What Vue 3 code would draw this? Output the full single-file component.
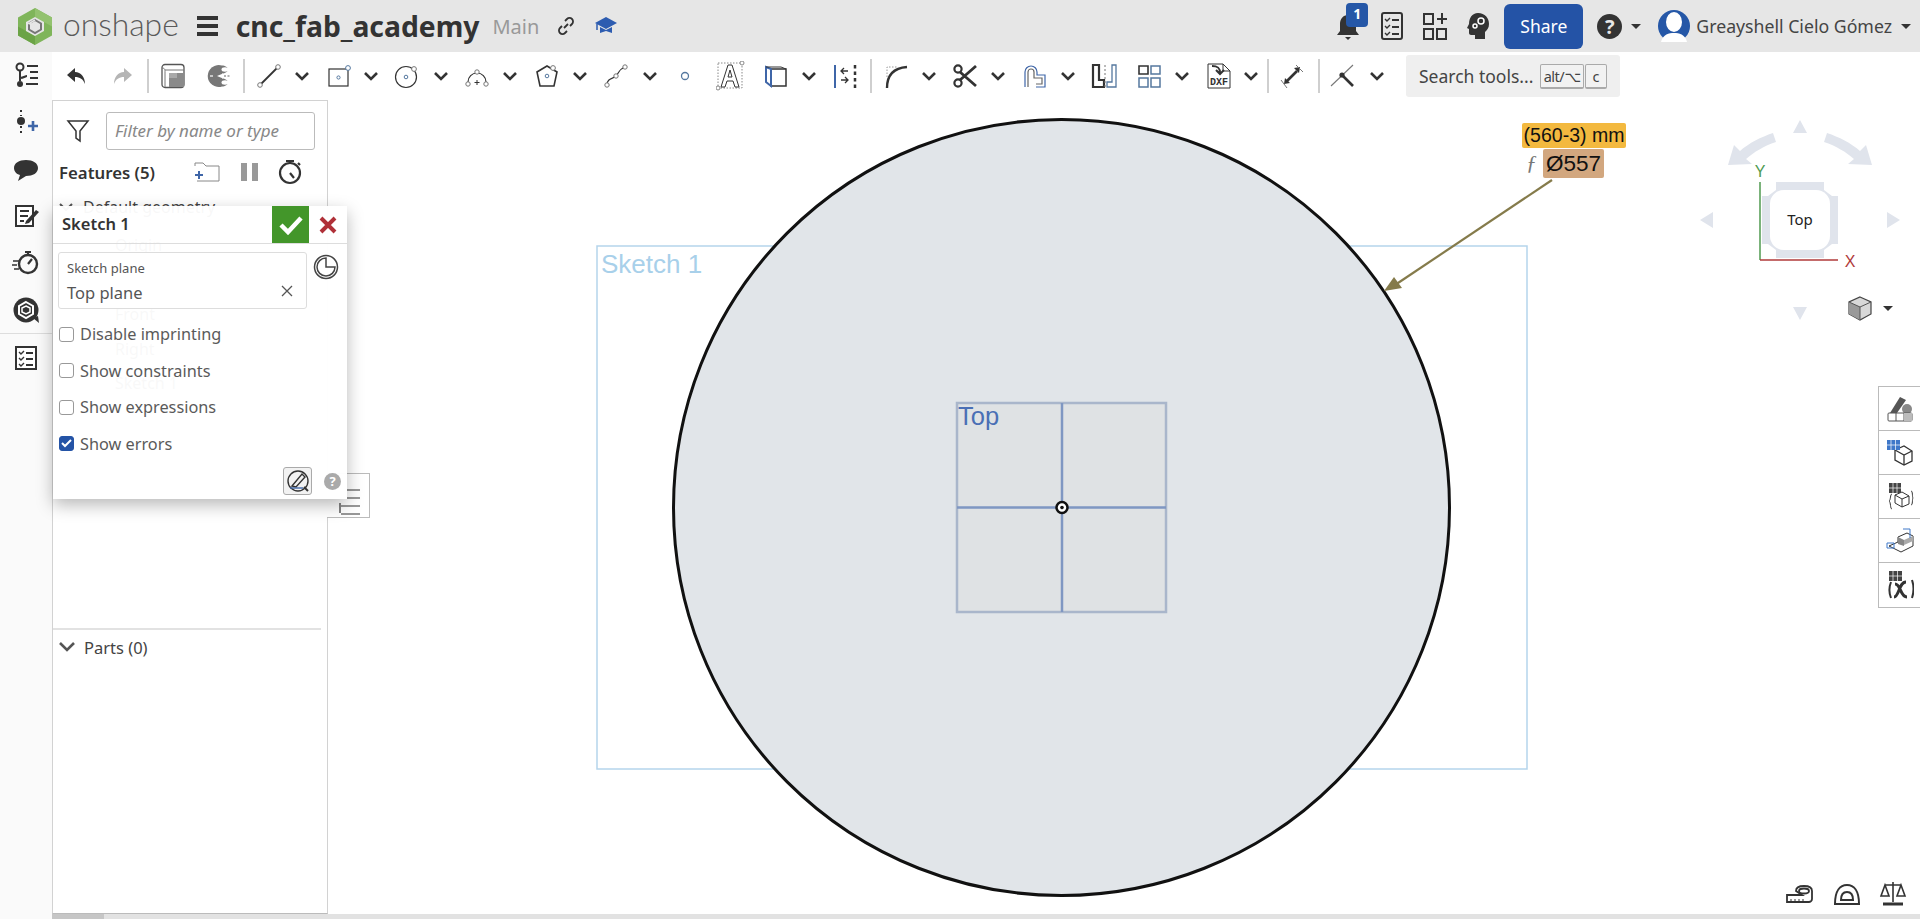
<script setup>
const ink = '#333'
const blue = '#3f66a8'

const chev = { chev: true, w: 16 }

// x is the centre of each toolbar item on the page
const rawTools = [
  { x: 77, w: 26, svg: `<path d="M11 5 3 12l8 7v-5c5 0 8 2 10 7 0-7-4-12-10-12z" fill="${ink}"/>` },
  { x: 122, w: 26, svg: `<path d="M15 5l8 7-8 7v-5c-5 0-8 2-10 7 0-7 4-12 10-12z" fill="#b5b5b5"/>` },
  { x: 148, sep: true },
  { x: 173, w: 26, svg: `<rect x="2" y="1.500" width="22" height="23" rx="3" fill="#fff" stroke="#555" stroke-width="1.300"/><path d="M2 5c3 0 3 2 3 4v15M5 7h19" fill="none" stroke="#777"/><path d="M9 10h15v14H9z" fill="#8a8a8a"/><path d="M9 10h8v5H9z" fill="#a9a9a9"/>` },
  { x: 218, w: 26, svg: `<path d="M17 2.500a11 11 0 1 0 0 21z" fill="#777"/><path d="M17 2.500c3 0 6 2 6 4s-3 4-6 4c-2 0-4 1-4 2.500s2 2.500 4 2.500c3 0 6 2 6 4s-3 4-6 4z" fill="#777"/><ellipse cx="20" cy="6.500" rx="3.500" ry="2.200" fill="#fff"/><ellipse cx="20" cy="19.500" rx="3.500" ry="2.200" fill="#fff"/><path d="M5 13h3" stroke="#fff" stroke-width="1.200"/><path d="M12 13l6-2.500v5z" fill="#fff"/><path d="M19 13h6" stroke="#666" stroke-width="1.200" stroke-dasharray="2 1.500"/>` },
  { x: 244, sep: true },
  { x: 269, w: 26, svg: `<path d="M5 21 21 5" stroke="${ink}" stroke-width="1.800"/><circle cx="4" cy="22" r="2.300" fill="#fff" stroke="#777"/><circle cx="22" cy="4" r="2.300" fill="#fff" stroke="#777"/>` },
  { x: 302, ...chev },
  { x: 339, w: 26, svg: `<rect x="3" y="6" width="19" height="17" fill="#fff" stroke="${ink}" stroke-width="1.200"/><circle cx="12.500" cy="14.500" r="1.600" fill="none" stroke="#55789f"/><circle cx="22" cy="5" r="2.400" fill="#fff" stroke="#55789f"/>` },
  { x: 371, ...chev },
  { x: 407, w: 26, svg: `<circle cx="12" cy="14" r="10.500" fill="#fff" stroke="${ink}" stroke-width="1.200"/><circle cx="12" cy="14" r="1.800" fill="none" stroke="#55789f"/><circle cx="20" cy="6" r="2.400" fill="#fff" stroke="#777"/>` },
  { x: 441, ...chev },
  { x: 477, w: 26, svg: `<path d="M4 19a9 9 0 0 1 18 0" fill="none" stroke="${ink}" stroke-width="1.200"/><circle cx="4" cy="21" r="2.200" fill="#fff" stroke="#777"/><circle cx="22" cy="21" r="2.200" fill="#fff" stroke="#777"/><circle cx="13" cy="9" r="2.200" fill="#fff" stroke="#777"/><path d="M13 17v5M10.500 19.500h5" stroke="${ink}"/>` },
  { x: 510, ...chev },
  { x: 547, w: 26, svg: `<path d="M13 3l10 6-3 14H6L3 9z" fill="#fff" stroke="${ink}" stroke-width="1.600"/><circle cx="13" cy="13" r="1.800" fill="none" stroke="#55789f"/><circle cx="19" cy="5" r="2.400" fill="#fff" stroke="#777"/>` },
  { x: 580, ...chev },
  { x: 616, w: 26, svg: `<path d="M4 22c0-7 6-6 9-9s3-7 9-9" fill="none" stroke="${ink}" stroke-width="1.200"/><circle cx="4" cy="22" r="2.200" fill="#fff" stroke="#777"/><circle cx="13" cy="13" r="2.200" fill="#fff" stroke="#777"/><circle cx="22" cy="4" r="2.200" fill="#fff" stroke="#777"/>` },
  { x: 650, ...chev },
  { x: 685, w: 26, svg: `<circle cx="13" cy="13" r="3.500" fill="#fff" stroke="#55789f" stroke-width="1.300"/>` },
  { x: 731, w: 30, svg: `<rect x="2" y="2" width="24" height="25" fill="none" stroke="#888" stroke-dasharray="1.500 1.500"/><path d="M5 26 12 4h4l7 22h-4l-2-6h-6l-2 6zM12 16h4l-2-7z" fill="#fff" stroke="${ink}"/><circle cx="26" cy="2" r="2" fill="#fff" stroke="#888"/><circle cx="2" cy="27" r="2" fill="#fff" stroke="#888"/>` },
  { x: 776, w: 26, svg: `<path d="M8 6h15v17H8z" fill="#fff" stroke="${ink}" stroke-width="1.500"/><path d="M3 4l5 2v17l-5-4z" fill="#fff" stroke="${blue}" stroke-width="2"/><path d="M3 4h15l5 2" fill="none" stroke="${ink}"/>` },
  { x: 809, ...chev },
  { x: 845, w: 26, svg: `<path d="M3 2v23" stroke="${blue}" stroke-width="2"/><path d="M23 2v23" stroke="${ink}" stroke-width="2.500" stroke-dasharray="3.500 3"/><path d="M16 8H9m3-3-3 3 3 3M9 17h7m-3-3 3 3-3 3" fill="none" stroke="${ink}" stroke-width="1.300"/>` },
  { x: 871, sep: true },
  { x: 896, w: 26, svg: `<path d="M4 25C4 13 10 5 24 4" fill="none" stroke="${ink}" stroke-width="2.400"/><path d="M4 14V4h10" fill="none" stroke="#999" stroke-dasharray="1.500 1.500"/>` },
  { x: 929, ...chev },
  { x: 965, w: 26, svg: `<path d="M8 9 24 23M8 17 24 3" stroke="${ink}" stroke-width="2.800"/><circle cx="6" cy="6" r="3.600" fill="#fff" stroke="${ink}" stroke-width="2.200"/><circle cx="6" cy="20" r="3.600" fill="#fff" stroke="${ink}" stroke-width="2.200"/>` },
  { x: 998, ...chev },
  { x: 1035, w: 26, svg: `<path d="M3 24V9a6 6 0 0 1 12 0v3h8v12H14" fill="none" stroke="${blue}" stroke-width="1.200"/><path d="M6 24V9a3 3 0 0 1 6 0v6h8v6h-6" fill="none" stroke="#666" stroke-width="1.200"/>` },
  { x: 1068, ...chev },
  { x: 1104, w: 26, svg: `<path d="M2 2h6v15h5v7H2z" fill="#fff" stroke="${ink}" stroke-width="2.200"/><path d="M21 2h4v22h-9v-5h5z" fill="#fff" stroke="#55789f" stroke-width="1.300"/><path d="M14 2v22" stroke="#777" stroke-dasharray="2 2"/>` },
  { x: 1149, w: 26, svg: `<path d="M3 3h9v8H3z" fill="#fff" stroke="${ink}" stroke-width="1.600"/><path d="M15 3h9v8h-9zM3 15h9v9H3zM15 15h9v9h-9z" fill="#fff" stroke="#55789f" stroke-width="1.500"/>` },
  { x: 1182, ...chev },
  { x: 1219, w: 28, svg: `<path d="M3 2h15l7 7v17H3z" fill="#fff" stroke="${ink}"/><path d="M18 2v7h7" fill="none" stroke="${ink}"/><path d="M7 4c6 0 8 2 8 7m-4-3 4 4 4-4" fill="none" stroke="${ink}" stroke-width="2"/><text x="14" y="23" text-anchor="middle" font-family="Liberation Mono" font-size="10" font-weight="700" fill="${ink}">DXF</text>` },
  { x: 1251, ...chev },
  { x: 1268, sep: true },
  { x: 1292, w: 26, svg: `<path d="M8 18 18 8" stroke="${ink}" stroke-width="2.600"/><path d="M15 5l6-1-1 6zM6 15l-1 6 6-1z" fill="${ink}"/><path d="M2 17l6 8M17 2l7 7" stroke="#777" stroke-width="1"/>` },
  { x: 1319, sep: true },
  { x: 1343, w: 28, svg: `<path d="M2 24 24 3" stroke="#777" stroke-width="1.100"/><path d="M13 13l11 11" stroke="${ink}" stroke-width="2.600"/><circle cx="13" cy="13" r="2.600" fill="${ink}"/>` },
  { x: 1377, ...chev },
]

// turn page centres into flow margins
let cursor = 52
const tools = rawTools.map((t) => {
  const w = t.sep ? 2 : t.w
  const gap = t.x - w / 2 - cursor
  cursor = t.x + w / 2
  return { ...t, w, gap }
})

const rail = [
  `<circle cx="8" cy="6" r="3.500" fill="none" stroke="${ink}" stroke-width="2"/><circle cx="8" cy="23" r="3" fill="${ink}"/><path d="M8 10v10M8 17c4 0 5-2 7-2" fill="none" stroke="${ink}" stroke-width="2"/><path d="M15 5h11M18 11h8M18 17h8M14 23h12" stroke="${ink}" stroke-width="2.200"/>`,
  `<circle cx="9" cy="13" r="4" fill="${ink}"/><path d="M9 2v6M9 18v8" stroke="${ink}" stroke-width="2" stroke-dasharray="2 3"/><path d="M21 13v10M16 18h10" stroke="${blue}" stroke-width="2.600"/>`,
  `<path d="M14 5c7 0 12 3 12 8s-5 8-12 8l-8 5 2-6c-4-1-6-4-6-7 0-5 5-8 12-8z" fill="${ink}"/>`,
  `<path d="M4 4h17v20H4z" fill="#fff" stroke="${ink}" stroke-width="2"/><path d="M8 9h9M8 14h8M8 19h4" stroke="${ink}" stroke-width="2"/><path d="M14 19l10-11 3 2-10 11-4 1z" fill="${ink}"/>`,
  `<circle cx="16" cy="15" r="9" fill="none" stroke="${ink}" stroke-width="2.400"/><path d="M13 3h6M16 3v3M16 15l4-5" stroke="${ink}" stroke-width="2.200"/><path d="M1 12h6M0 16h5M2 20h5" stroke="${ink}" stroke-width="1.600"/>`,
  `<circle cx="14" cy="14" r="12.500" fill="${ink}"/><path d="M14 6l7 4v8l-7 4-7-4v-8z" fill="none" stroke="#fff" stroke-width="2"/><path d="M14 10l4 2v4l-4 2-4-2v-4z" fill="none" stroke="#fff" stroke-width="1.500"/><path d="M21 22l6 5-1-7z" fill="${ink}"/>`,
]
const checklist = `<path d="M4 3h20v22H4z" fill="#fff" stroke="${ink}" stroke-width="2"/><path d="M7 8l2 2 3-3M7 14l2 2 3-3M7 20l2 2 3-3" fill="none" stroke="${ink}" stroke-width="1.400"/><path d="M14 9h7M14 15h7M14 21h7" stroke="${ink}" stroke-width="2"/>`

const treeRows = ['Origin', 'Top', 'Front', 'Right']
const options = [
  { label: 'Disable imprinting', on: false },
  { label: 'Show constraints', on: false },
  { label: 'Show expressions', on: false },
  { label: 'Show errors', on: true },
]

const sideTabs = [
  `<path d="M14 3l6 3-9 13H4z" fill="#555"/><circle cx="21" cy="15" r="5" fill="#888"/><rect x="2" y="19" width="24" height="8" rx="1" fill="#fff" stroke="#555"/><path d="M10 19v8M18 19v8" stroke="#555"/><rect x="18" y="19" width="8" height="8" fill="#bbb"/>`,
  `<path d="M9 12l9-4 8 5v10l-8 4-9-5z" fill="#fff" stroke="${ink}" stroke-width="1.300"/><path d="M9 12l9 5 8-4M18 17v10" fill="none" stroke="${ink}" stroke-width="1.300"/><path d="M1 2h13v10H1z" fill="#3f78c9"/><path d="M5 2v10M9.500 2v10M1 7h13" stroke="#fff" stroke-width=".7"/>`,
  `<path d="M9 13l7-3 7 4v8l-7 3-7-4z" fill="#fff" stroke="${ink}"/><path d="M9 13l7 4 7-3M16 17v8" fill="none" stroke="${ink}"/><path d="M3 1h12v10H3z" fill="#444"/><path d="M7 1v10M11 1v10M3 6h12" stroke="#fff" stroke-width=".7"/><path d="M6 12c-2 0-1 6-3 7 2 1 1 8 3 8M25 9c2 0 1 6 2 7-1 1 0 7-2 7" fill="none" stroke="${ink}"/>`,
  `<path d="M3 20l9-4 0-5 9-4 6 3v10l-12 6z" fill="#fff" stroke="${ink}"/><path d="M12 11l6 3 0 6-6-2z" fill="#888"/><path d="M18 14l9-4v5l-9 4z" fill="#aaa"/><path d="M17 3h7v9" fill="none" stroke="#3f78c9"/><path d="M1 17h7v5H1z" fill="none" stroke="#3f78c9"/>`,
  `<path d="M3 1h13v10H3z" fill="#444"/><path d="M7 1v10M11.500 1v10M3 6h13" stroke="#fff" stroke-width=".7"/><path d="M5 12c-2 5-2 11 0 16M26 10c2 6 2 12 0 18" fill="none" stroke="${ink}" stroke-width="2"/><path d="M8 27c5 0 5-15 12-15M9 14c6 0 5 13 12 13" fill="none" stroke="${ink}" stroke-width="3"/>`,
]
</script>

<template>
  <div class="page">
    <header class="topbar">
      <svg class="logo" width="34" height="37" viewBox="0 0 34 37">
        <path d="M17 0l17 9.500v18L17 37 0 27.500v-18z" fill="#7fb55a" />
        <path d="M17 0l17 9.500v9l-8-4.500-9-5z" fill="#93c26f" />
        <path d="M0 18.500l8 4.500 9 5v9L0 27.500z" fill="#6ba346" />
        <path d="M17 9l9 5v9l-9 5-9-5v-9z" fill="#e6e6e6" />
        <path d="M17 12l6 3.500v6L17 25l-6-3.500v-6z" fill="none" stroke="#777" stroke-width="2" />
        <path d="M17 12l-6 3.500 6 2" fill="none" stroke="#e6e6e6" stroke-width="1.500" />
      </svg>
      <span class="brand">onshape</span>
      <span class="burger"><i></i><i></i><i></i></span>
      <h1 class="doc-title">cnc_fab_academy</h1>
      <span class="branch">Main</span>
      <svg class="link" width="20" height="20" viewBox="0 0 20 20" fill="none" stroke="#333" stroke-width="1.800">
        <path d="M8 12l4-4M9 5l2-2a3.500 3.500 0 0 1 5 5l-2 2M11 15l-2 2a3.500 3.500 0 0 1-5-5l2-2" />
      </svg>
      <svg class="cap" width="24" height="22" viewBox="0 0 24 22">
        <path d="M12 2L1 8l11 6 11-6z" fill="#2d5cb0" />
        <path d="M6 12v6l6-2 6 2v-6l-6 3z" fill="#2d5cb0" />
        <path d="M3 9v6" stroke="#2d5cb0" stroke-width="1.500" />
      </svg>

      <div class="top-right">
        <span class="bell">
          <svg width="28" height="30" viewBox="0 0 28 30">
            <path d="M14 4c5 0 8 4 8 9v7l3 4H3l3-4v-7c0-5 3-9 8-9z" fill="#333" />
            <path d="M11 26h6l-3 3z" fill="#333" />
          </svg>
          <b class="badge">1</b>
        </span>
        <svg class="t-list" width="22" height="28" viewBox="0 0 22 28" fill="none" stroke="#333" stroke-width="2">
          <rect x="1" y="1" width="20" height="26" rx="2" />
          <path d="M4 7l2 2 3-3M4 14l2 2 3-3M4 21l2 2 3-3" stroke-width="1.400" />
          <path d="M11 8h7M11 15h7M11 22h7" />
        </svg>
        <svg class="t-add" width="26" height="28" viewBox="0 0 26 28" fill="none" stroke="#333" stroke-width="2">
          <path d="M2 2h9v10H2zM2 17h9v10H2zM15 17h9v10h-9zM15 7h10M20 1v11" />
        </svg>
        <svg class="t-brain" width="24" height="28" viewBox="0 0 24 28">
          <path d="M12 1c7 0 11 5 11 11 0 4-2 6-4 8v7H9v-4H5c-1 0-2-1-2-2v-4l-2-1 2-4c0-6 3-11 9-11z" fill="#333" />
          <circle cx="15" cy="9" r="3" fill="none" stroke="#fff" stroke-width="1.500" />
          <circle cx="9" cy="14" r="2" fill="none" stroke="#fff" stroke-width="1.500" />
        </svg>
        <button class="share">Share</button>
        <span class="help">?</span>
        <i class="caret help-caret"></i>
        <svg class="avatar" width="32" height="34" viewBox="0 0 32 34">
          <circle cx="16" cy="17" r="16" fill="#2557a7" />
          <ellipse cx="16" cy="13" rx="8" ry="10" fill="#fff" />
          <path d="M3 33c2-8 8-9 13-9s11 1 13 9z" fill="#fff" />
        </svg>
        <span class="user">Greayshell Cielo Gómez</span>
        <i class="caret user-caret"></i>
      </div>
    </header>

    <div class="body">
      <nav class="rail">
        <div class="rail-top">
          <svg v-for="(icon, i) in rail" :key="i" width="28" height="28" viewBox="0 0 28 28" v-html="icon"></svg>
        </div>
        <div class="rail-bottom">
          <svg width="28" height="28" viewBox="0 0 28 28" v-html="checklist"></svg>
        </div>
      </nav>

      <div class="main">
        <div class="toolbar">
          <template v-for="t in tools" :key="t.x">
            <span v-if="t.sep" class="sep" :style="{ marginLeft: t.gap + 'px' }"></span>
            <svg
              v-else-if="t.chev"
              class="chev"
              :style="{ marginLeft: t.gap + 'px' }"
              width="16"
              height="10"
              viewBox="0 0 16 10"
              fill="none"
              stroke="#333"
              stroke-width="2.600"
            >
              <path d="M2 2l6 6 6-6" />
            </svg>
            <svg
              v-else
              :style="{ marginLeft: t.gap + 'px' }"
              :width="t.w"
              :height="t.w"
              :viewBox="`0 0 ${t.w} ${t.w}`"
              v-html="t.svg"
            ></svg>
          </template>
          <div class="search">
            <span class="search-label">Search tools...</span>
            <kbd class="key key-alt">alt/⌥</kbd>
            <kbd class="key key-c">c</kbd>
          </div>
        </div>

        <div class="work">
          <aside class="panel">
            <div class="filter-row">
              <svg width="24" height="26" viewBox="0 0 24 26" fill="none" stroke="#333" stroke-width="1.500">
                <path d="M2 3h20l-8 10v10l-4-3v-7z" />
              </svg>
              <div class="filter-input">Filter by name or type</div>
            </div>
            <div class="features-row">
              <span class="features-title">Features (5)</span>
              <svg class="f-folder" width="26" height="22" viewBox="0 0 26 22" fill="none">
                <path d="M1 5V2h8l3 3h13v15H3" stroke="#888" />
                <path d="M1 14h8M5 10v8" stroke="#3f66a8" stroke-width="2" />
              </svg>
              <span class="pause"><i></i><i></i></span>
              <svg class="f-timer" width="24" height="26" viewBox="0 0 24 26" fill="none" stroke="#333" stroke-width="2.200">
                <circle cx="12" cy="14" r="10" />
                <path d="M8 2h8M12 2v2M12 14l4 5M20 4l2 2" />
              </svg>
            </div>
            <div class="tree-head">
              <svg width="14" height="9" viewBox="0 0 14 9" fill="none" stroke="#555" stroke-width="2"><path d="M1 1l6 6 6-6" /></svg>
              <span>Default geometry</span>
            </div>
            <ul class="tree">
              <li v-for="row in treeRows" :key="row">{{ row }}</li>
              <li class="tree-active">Sketch 1</li>
            </ul>
            <div class="parts-row">
              <svg width="18" height="12" viewBox="0 0 18 12" fill="none" stroke="#555" stroke-width="2.600">
                <path d="M2 2l7 7 7-7" />
              </svg>
              <span>Parts (0)</span>
            </div>
          </aside>

          <div class="canvas">
            <svg class="drawing" viewBox="328 100 1592 814" width="1592" height="814">
              <rect x="597" y="246" width="930" height="523" fill="none" stroke="#b5d5ec" stroke-width="1.500" />
              <text x="601" y="273" class="sk-label">Sketch 1</text>
              <circle cx="1061.500" cy="507.500" r="388" fill="#e1e5e9" stroke="#111" stroke-width="3" />
              <rect x="957" y="403" width="209" height="209" fill="#dfe2e4" stroke="#a9b6cb" stroke-width="2.500" />
              <path d="M1062 403v209M957 507.500h209" stroke="#7f97c2" stroke-width="2.500" />
              <text x="958" y="425" class="top-label">Top</text>
              <circle cx="1062" cy="507.500" r="5.500" fill="#fff" stroke="#111" stroke-width="2.500" />
              <circle cx="1062" cy="507.500" r="1.800" fill="#111" />
              <path d="M1552 180 1392 287" stroke="#857b4b" stroke-width="2.200" />
              <path d="M1384 291l18-3-8-11z" fill="#857b4b" />

              <g fill="#e0e4ec">
                <path d="M1800 120l7 13h-14zM1800 320l-7-13h14zM1700 220l13-8v16zM1900 220l-13-8v16z" />
                <path d="M1773 133l3 9c-12 4-22 10-30 17l6 5-24 1 6-20 6 6c9-8 21-14 33-18z" />
                <path d="M1827 133l-3 9c12 4 22 10 30 17l-6 5 24 1-6-20-6 6c-9-8-21-14-33-18z" />
                <path d="M1776 182h48v8l8 6h6v48h-6l-8 6v8h-48v-8l-8-6h-6v-48h6l8-6z" />
              </g>
              <rect x="1770" y="190" width="60" height="60" rx="14" fill="#fff" />
              <path d="M1760 182v78" fill="none" stroke="#4f9a4f" stroke-width="1.500" />
              <path d="M1760 260h78" stroke="#b03a3a" stroke-width="1.500" />
              <text x="1760" y="177" class="axis" text-anchor="middle" fill="#4f9a4f">Y</text>
              <text x="1850" y="267" class="axis" text-anchor="middle" fill="#b03a3a">X</text>
              <text x="1800" y="225" class="cube-label" text-anchor="middle">Top</text>

              <path d="M1860 297l11 5v12l-11 6-11-6v-12z" fill="#d8d8d8" stroke="#444" stroke-width="1.200" />
              <path d="M1849 302l11 5v13l-11-6z" fill="#999" />
              <path d="M1849 302l11 5 11-5M1860 307v13" fill="none" stroke="#555" />
              <path d="M1883 306h10l-5 5z" fill="#333" />

              <g fill="none" stroke="#333" stroke-width="1.800">
                <path d="M1796 891c0-3 3-5 8-5s8 2 8 5v8c0 2-2 3-3 3h-22v-7h15z" fill="#fff" />
                <ellipse cx="1804" cy="891" rx="5" ry="2.500" />
                <path d="M1791 902v-3M1795 902v-3M1799 902v-3M1803 902v-3" stroke-width="1" />
              </g>
              <g fill="none" stroke="#333" stroke-width="2">
                <path d="M1835 904c0-13 5-19 12-19s12 6 12 19z" />
                <path d="M1841 900c0-6 3-8 6-8s6 2 6 8z" />
              </g>
              <g fill="none" stroke="#333" stroke-width="1.600">
                <path d="M1893 882v20M1885 885h16M1885 885l-4 11h8zM1901 885l-4 11h8z" />
                <path d="M1883 904h20" stroke-width="3" />
              </g>
            </svg>

            <div class="dim-expr">(560-3) mm</div>
            <div class="dim-fn">ƒ</div>
            <div class="dim-val">Ø557</div>

            <div class="side-tabs">
              <div v-for="(icon, i) in sideTabs" :key="i" class="side-tab">
                <svg width="28" height="30" viewBox="0 0 28 30" v-html="icon"></svg>
              </div>
            </div>
          </div>
        </div>
        <div class="tabstrip"><span class="tab-thumb"></span></div>
      </div>
    </div>

    <div class="list-toggle">
      <svg width="22" height="32" viewBox="0 0 22 32" stroke="#333" stroke-width="1.200">
        <path d="M8 7h13M8 15h13M2 23h19M2 31h19M1 20v10" />
      </svg>
    </div>

    <section class="dialog">
      <div class="dialog-head">
        <span class="dialog-title">Sketch 1</span>
        <button class="ok">
          <svg width="24" height="20" viewBox="0 0 24 20" fill="none" stroke="#fff" stroke-width="4.500"><path d="M2 10l7 7L22 3" /></svg>
        </button>
        <button class="cancel">
          <svg width="18" height="18" viewBox="0 0 18 18" fill="none" stroke="#b03038" stroke-width="4"><path d="M2 2l14 14M16 2 2 16" /></svg>
        </button>
      </div>
      <div class="plane-row">
        <div class="plane-field">
          <span class="plane-label">Sketch plane</span>
          <span class="plane-value">Top plane</span>
          <svg class="plane-x" width="12" height="12" viewBox="0 0 12 12" stroke="#555" stroke-width="1.300"><path d="M1 1l10 10M11 1 1 11" /></svg>
        </div>
        <svg class="clock" width="26" height="26" viewBox="0 0 26 26" fill="none" stroke="#444" stroke-width="1.500">
          <circle cx="13" cy="13" r="11.500" />
          <path d="M13 4a9 9 0 1 0 9 9h-9z" />
        </svg>
      </div>
      <label v-for="opt in options" :key="opt.label" class="opt">
        <span class="box" :class="{ on: opt.on }">
          <svg v-if="opt.on" width="11" height="9" viewBox="0 0 11 9" fill="none" stroke="#fff" stroke-width="2"><path d="M1 4l3 3 6-6" /></svg>
        </span>
        {{ opt.label }}
      </label>
      <div class="dialog-foot">
        <span class="inspect">
          <svg width="24" height="24" viewBox="0 0 24 24" fill="none" stroke="#333" stroke-width="1.400">
            <circle cx="12" cy="12" r="10" />
            <path d="M6 17 16 5l3 3-9 10z" />
            <path d="M4 19h13" stroke="#3f66a8" />
            <path d="M18 18l4 4" stroke-width="2" />
          </svg>
        </span>
        <span class="foot-help">?</span>
      </div>
    </section>
  </div>
</template>

<style>
html,
body {
  margin: 0;
  overflow: hidden;
}
</style>

<style scoped>
.page {
  position: relative;
  width: 1920px;
  height: 919px;
  overflow: hidden;
  background: #fff;
  font-family: "Noto Sans", sans-serif;
  color: #333;
}

.topbar {
  height: 52px;
  background: #e6e6e6;
  display: flex;
  align-items: center;
}
.logo {
  margin-left: 18px;
}
.brand {
  margin-left: 11px;
  font-family: Lato, sans-serif;
  font-weight: 300;
  font-size: 31.800px;
  color: #5a5a5a;
  position: relative;
  top: -2px;
}
.burger {
  margin-left: 18px;
  width: 21px;
  display: flex;
  flex-direction: column;
  gap: 4px;
}
.burger i {
  height: 4px;
  background: #333;
}
.doc-title {
  margin: 0 0 0 18px;
  font-size: 28.300px;
  font-weight: 700;
  color: #333;
}
.branch {
  margin-left: 13px;
  font-size: 20px;
  color: #999;
}
.link {
  margin-left: 17px;
}
.cap {
  margin-left: 18px;
}
.top-right {
  margin-left: auto;
  display: flex;
  align-items: center;
  height: 52px;
}
.bell {
  position: relative;
  margin-right: 19px;
  display: flex;
}
.badge {
  position: absolute;
  top: -8px;
  left: 12px;
  width: 22px;
  height: 24px;
  border-radius: 4px;
  background: #2557a7;
  color: #fff;
  font-size: 14px;
  line-height: 22px;
  text-align: center;
}
.t-add {
  margin-left: 19px;
}
.t-brain {
  margin-left: 18px;
}
.share {
  margin-left: 14px;
  width: 79px;
  height: 45px;
  border: 0;
  border-radius: 6px;
  background: #2453a6;
  color: #fff;
  font: 17.500px "Noto Sans", sans-serif;
}
.help {
  margin-left: 14px;
  width: 25px;
  height: 25px;
  border-radius: 50%;
  background: #333;
  color: #e6e6e6;
  font-size: 20px;
  font-weight: 700;
  line-height: 25px;
  text-align: center;
}
.caret {
  width: 0;
  height: 0;
  border-left: 5px solid transparent;
  border-right: 5px solid transparent;
  border-top: 5px solid #333;
}
.help-caret {
  margin-left: 9px;
}
.avatar {
  margin-left: 17px;
}
.user {
  margin-left: 6px;
  font-size: 17.700px;
  color: #444;
  white-space: nowrap;
}
.user-caret {
  margin: 0 9px 0 9px;
}

.body {
  display: flex;
  height: 867px;
}
.rail {
  width: 52px;
  background: #fafafa;
  flex: none;
}
.rail-top {
  height: 282px;
  display: flex;
  flex-direction: column;
  align-items: center;
  justify-content: space-around;
  border-bottom: 1px solid #ddd;
  box-sizing: border-box;
}
.rail-bottom {
  height: 48px;
  display: flex;
  align-items: center;
  justify-content: center;
}

.main {
  flex: 1;
  min-width: 0;
  display: flex;
  flex-direction: column;
}
.toolbar {
  height: 48px;
  flex: none;
  display: flex;
  align-items: center;
}
.sep {
  width: 2px;
  height: 34px;
  background: #cfcfcf;
  flex: none;
}
.toolbar svg {
  flex: none;
}
.search {
  margin-left: 21px;
  width: 214px;
  height: 42px;
  background: #efefef;
  border-radius: 3px;
  display: flex;
  align-items: center;
  box-sizing: border-box;
  padding-left: 13px;
}
.search-label {
  font-size: 17.500px;
  color: #444;
  width: 121px;
  white-space: nowrap;
}
.key {
  height: 25px;
  box-sizing: border-box;
  border: 1px solid #aaa;
  border-bottom-width: 2px;
  border-radius: 2px;
  background: #f2f2f2;
  font: 14.500px "Noto Sans", "DejaVu Sans", sans-serif;
  line-height: 22px;
  text-align: center;
  color: #444;
  white-space: nowrap;
}
.key-alt {
  width: 44px;
  letter-spacing: -0.5px;
}
.key-c {
  width: 22px;
  margin-left: 1px;
}

.work {
  flex: 1;
  min-height: 0;
  display: flex;
}
.panel {
  width: 276px;
  flex: none;
  box-sizing: border-box;
  border: 1.500px solid #d2d2d2;
  border-bottom-color: #bbb;
  position: relative;
  background: #fff;
}
.filter-row {
  display: flex;
  align-items: center;
  height: 38px;
  margin-top: 11px;
  padding-left: 13px;
}
.filter-input {
  margin-left: 16px;
  width: 209px;
  height: 38px;
  box-sizing: border-box;
  border: 1px solid #bbb;
  border-radius: 3px;
  padding-left: 8px;
  font-size: 17px;
  font-style: italic;
  line-height: 36px;
  color: #888;
  white-space: nowrap;
}
.features-row {
  display: flex;
  align-items: center;
  height: 28px;
  margin-top: 8px;
  padding-left: 6px;
}
.features-title {
  font-size: 16.800px;
  font-weight: 600;
  color: #333;
  width: 135px;
}
.pause {
  margin-left: 21px;
  display: flex;
  gap: 5px;
}
.pause i {
  width: 6px;
  height: 18px;
  background: #999;
}
.f-timer {
  margin-left: 20px;
}
.tree-head {
  margin-top: 10px;
  padding-left: 6px;
  display: flex;
  align-items: center;
  gap: 10px;
  font-size: 16px;
  color: #444;
}
.tree {
  list-style: none;
  margin: 0;
  padding: 0;
  position: absolute;
  top: 127px;
  left: 0;
  right: 6px;
  font-size: 16px;
  color: #555;
}
.tree li {
  height: 34.500px;
  line-height: 34.500px;
  padding-left: 62px;
}
.tree-active {
  background: #eaf2fb;
}
.parts-row {
  position: absolute;
  left: 0;
  right: 6px;
  top: 527px;
  border-top: 2px solid #e2e2e2;
  display: flex;
  align-items: center;
  height: 34px;
  padding-left: 5px;
  gap: 8px;
  font-size: 16.500px;
  color: #444;
}

.canvas {
  flex: 1;
  position: relative;
  min-width: 0;
}
.drawing {
  position: absolute;
  top: 0;
  left: 0;
  display: block;
}
.sk-label {
  font: 26px "Liberation Sans", sans-serif;
  fill: #a8d0ea;
}
.top-label {
  font: 25.500px "Liberation Sans", sans-serif;
  fill: #4a6fb5;
}
.axis {
  font: 16px "Liberation Sans", sans-serif;
}
.cube-label {
  font: 15px "Noto Sans", sans-serif;
  fill: #222;
}
.dim-expr {
  position: absolute;
  left: 1194px;
  top: 23px;
  width: 104px;
  height: 25px;
  border-radius: 2px;
  background: #f3b93f;
  font: 19.500px/25px "Liberation Sans", sans-serif;
  color: #111;
  text-align: center;
  white-space: nowrap;
}
.dim-fn {
  position: absolute;
  left: 1198px;
  top: 50px;
  font: italic 22px "Liberation Serif", serif;
  color: #777;
}
.dim-val {
  position: absolute;
  left: 1215px;
  top: 49px;
  width: 61px;
  height: 29px;
  border-radius: 2px;
  background: #d2a77f;
  font: 22.500px/29px "Liberation Sans", sans-serif;
  color: #111;
  text-align: center;
}
.side-tabs {
  position: absolute;
  right: 0;
  top: 286px;
  width: 42px;
  box-sizing: border-box;
  border: 1px solid #bbb;
  border-right: 0;
  background: #fff;
}
.side-tab {
  height: 44px;
  box-sizing: border-box;
  display: flex;
  align-items: center;
  justify-content: center;
  border-bottom: 1px solid #bbb;
}
.side-tab:last-child {
  border-bottom: 0;
}
.tabstrip {
  height: 5px;
  flex: none;
  background: #e2e2e2;
}
.tab-thumb {
  display: block;
  width: 52px;
  height: 5px;
  background: #c6c6c6;
}

.list-toggle {
  position: absolute;
  left: 327px;
  top: 473px;
  width: 43px;
  height: 45px;
  box-sizing: border-box;
  border: 1px solid #bbb;
  border-left: 0;
  background: #fff;
  display: flex;
  justify-content: flex-end;
  align-items: flex-end;
  padding: 0 8px 2px 0;
}

.dialog {
  position: absolute;
  left: 53px;
  top: 206px;
  width: 294px;
  height: 293px;
  background: rgba(255, 255, 255, 0.96);
  box-shadow: 0 6px 16px rgba(0, 0, 0, 0.28);
}
.dialog-head {
  height: 37px;
  display: flex;
  align-items: center;
  border-bottom: 1px solid #ddd;
}
.dialog-title {
  margin-left: 9px;
  font-size: 16.500px;
  font-weight: 600;
  color: #333;
  width: 210px;
  position: relative;
  top: -1px;
}
.ok {
  width: 37px;
  height: 37px;
  border: 0;
  padding: 0;
  background: #43962a;
  display: flex;
  align-items: center;
  justify-content: center;
}
.cancel {
  width: 38px;
  height: 37px;
  border: 0;
  padding: 0;
  background: transparent;
  display: flex;
  align-items: center;
  justify-content: center;
}
.plane-row {
  display: flex;
  margin: 8px 0 0 5px;
  align-items: flex-start;
}
.plane-field {
  position: relative;
  width: 249px;
  height: 57px;
  box-sizing: border-box;
  border: 1px solid #ddd;
  border-radius: 3px;
  background: #fff;
  padding: 6px 8px;
  display: flex;
  flex-direction: column;
}
.plane-label {
  font-size: 13px;
  color: #555;
}
.plane-value {
  margin-top: 4px;
  font-size: 16.500px;
  color: #555;
}
.plane-x {
  position: absolute;
  right: 13px;
  top: 32px;
}
.clock {
  margin: 2px 0 0 6px;
}
.opt {
  display: flex;
  align-items: center;
  height: 36.500px;
  padding-left: 6px;
  font-size: 16.300px;
  color: #5a5a5a;
}
.plane-row + .opt {
  margin-top: 7px;
}
.box {
  width: 15px;
  height: 15px;
  box-sizing: border-box;
  border: 1px solid #999;
  border-radius: 3px;
  background: #fff;
  margin-right: 6px;
  display: flex;
  align-items: center;
  justify-content: center;
}
.box.on {
  background: #2453a6;
  border-color: #2453a6;
}
.dialog-foot {
  position: absolute;
  right: 6px;
  bottom: 4px;
  display: flex;
  align-items: center;
}
.inspect {
  width: 29px;
  height: 28px;
  box-sizing: border-box;
  border: 1px solid #aaa;
  border-radius: 3px;
  background: #f2f2f2;
  display: flex;
  align-items: center;
  justify-content: center;
}
.foot-help {
  margin-left: 12px;
  width: 17px;
  height: 17px;
  border-radius: 50%;
  background: #aaa;
  color: #fff;
  font-size: 13px;
  font-weight: 700;
  line-height: 17px;
  text-align: center;
}
</style>
